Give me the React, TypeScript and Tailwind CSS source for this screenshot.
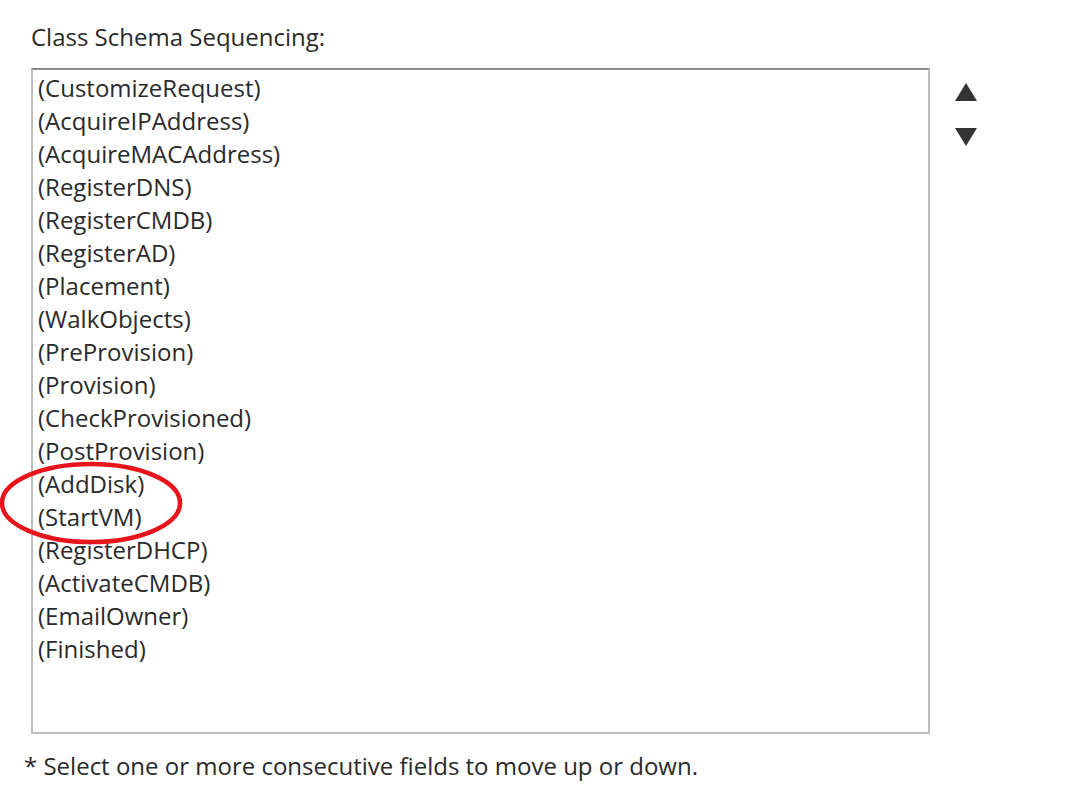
const steps = [
  "CustomizeRequest",
  "AcquireIPAddress",
  "AcquireMACAddress",
  "RegisterDNS",
  "RegisterCMDB",
  "RegisterAD",
  "Placement",
  "WalkObjects",
  "PreProvision",
  "Provision",
  "CheckProvisioned",
  "PostProvision",
  "AddDisk",
  "StartVM",
  "RegisterDHCP",
  "ActivateCMDB",
  "EmailOwner",
  "Finished",
];

export default function App() {
  return (
    <div className="relative h-[802px] w-[1068px] bg-white text-[#2a2a2a] font-['Open_Sans',sans-serif]">
      <div className="pl-[31px] pt-[21px]">
        <div className="text-[24px] leading-[32px]">Class Schema Sequencing:</div>
        <div className="mt-[15px] flex">
          <div className="h-[666px] w-[899px] border-2 border-[#bdbdbd] border-t-[#8a8a8a] pl-[5px] pt-[1px]">
            {steps.map((s) => (
              <div key={s} className="text-[24px] leading-[33px]">
                ({s})
              </div>
            ))}
          </div>
          <div className="ml-[25px] flex flex-col gap-[27px] pt-[15px]">
            <svg width="22" height="18" viewBox="0 0 22 18">
              <polygon points="11,0 22,18 0,18" fill="#333" />
            </svg>
            <svg width="22" height="18" viewBox="0 0 22 18">
              <polygon points="0,0 22,0 11,18" fill="#333" />
            </svg>
          </div>
        </div>
        <div className="-ml-[7px] mt-[16px] text-[24px] leading-[32px]">
          * Select one or more consecutive fields to move up or down.
        </div>
      </div>
      <svg
        className="absolute left-0 top-[460px]"
        width="186"
        height="86"
        viewBox="0 0 186 86"
      >
        <ellipse cx="91" cy="43" rx="89" ry="39" fill="none" stroke="#e8141c" strokeWidth="4.5" />
      </svg>
    </div>
  );
}
